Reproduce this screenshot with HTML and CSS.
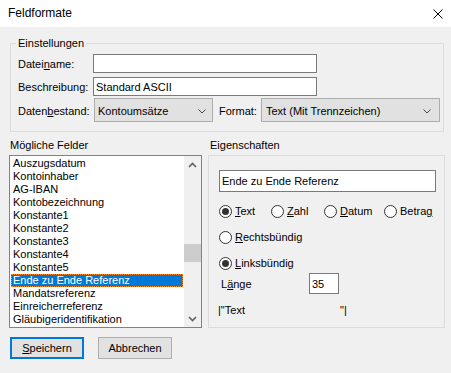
FILE: index.html
```html
<!DOCTYPE html>
<html lang="de">
<head>
    <meta charset="UTF-8">
    <title>Feldformate</title>
    <link rel="stylesheet" href="styles.css">
</head>
<body>
    <div class="titlebar">
        <span class="title">Feldformate</span>
        <svg class="close" width="10" height="10" viewBox="0 0 10 10">
            <path d="M0.5 0.5 L9.5 9.5 M9.5 0.5 L0.5 9.5" stroke="#000" stroke-width="1" fill="none"/>
        </svg>
    </div>

    <div class="dialog">
        <fieldset class="settings">
            <legend>Einstellungen</legend>

            <div class="row row-first">
                <label class="label">Datei<u>n</u>ame:</label>
                <input class="textbox" type="text" value="">
            </div>

            <div class="row row-second">
                <label class="label">Beschreibung:</label>
                <input class="textbox" type="text" value="Standard ASCII">
            </div>

            <div class="row row-third">
                <label class="label">Daten<u>b</u>estand:</label>
                <div class="combo combo-bestand">
                    <span>Kontoumsätze</span>
                    <svg width="8" height="5" viewBox="0 0 8 5"><polyline points="0.5,0.5 4,4 7.5,0.5" fill="none" stroke="#444" stroke-width="1"/></svg>
                </div>
                <label class="label-format">Format:</label>
                <div class="combo combo-format">
                    <span>Text (Mit Trennzeichen)</span>
                    <svg width="8" height="5" viewBox="0 0 8 5"><polyline points="0.5,0.5 4,4 7.5,0.5" fill="none" stroke="#444" stroke-width="1"/></svg>
                </div>
            </div>
        </fieldset>

        <div class="panels">
            <div class="col-fields">
                <div class="caption">Mögliche Felder</div>
                <div class="listbox">
                    <ul class="items">
                        <li>Auszugsdatum</li>
                        <li>Kontoinhaber</li>
                        <li>AG-IBAN</li>
                        <li>Kontobezeichnung</li>
                        <li>Konstante1</li>
                        <li>Konstante2</li>
                        <li>Konstante3</li>
                        <li>Konstante4</li>
                        <li>Konstante5</li>
                        <li class="selected">Ende zu Ende Referenz</li>
                        <li>Mandatsreferenz</li>
                        <li>Einreicherreferenz</li>
                        <li>Gläubigeridentifikation</li>
                    </ul>
                    <div class="scrollbar">
                        <div class="sb-btn">
                            <svg width="9" height="6" viewBox="0 0 9 6"><polyline points="1,5 4.5,1.5 8,5" fill="none" stroke="#606060" stroke-width="1.6"/></svg>
                        </div>
                        <div class="sb-track"><div class="sb-thumb"></div></div>
                        <div class="sb-btn">
                            <svg width="9" height="6" viewBox="0 0 9 6"><polyline points="1,1 4.5,4.5 8,1" fill="none" stroke="#606060" stroke-width="1.6"/></svg>
                        </div>
                    </div>
                </div>
            </div>

            <div class="col-props">
                <div class="caption">Eigenschaften</div>
                <div class="propbox">
                    <input class="textbox name-box" type="text" value="Ende zu Ende Referenz">

                    <div class="radio-row type-row">
                        <label class="opt opt-text"><input class="radio" type="radio" name="typ" checked><span><u>T</u>ext</span></label>
                        <label class="opt opt-zahl"><input class="radio" type="radio" name="typ"><span><u>Z</u>ahl</span></label>
                        <label class="opt opt-datum"><input class="radio" type="radio" name="typ"><span><u>D</u>atum</span></label>
                        <label class="opt"><input class="radio" type="radio" name="typ"><span>Betra<u>g</u></span></label>
                    </div>

                    <div class="radio-row">
                        <label class="opt"><input class="radio" type="radio" name="ausr"><span><u>R</u>echtsbündig</span></label>
                    </div>

                    <div class="radio-row">
                        <label class="opt"><input class="radio" type="radio" name="ausr" checked><span><u>L</u>inksbündig</span></label>
                    </div>

                    <div class="length-row">
                        <label class="length-label">L<u>ä</u>nge</label>
                        <input class="textbox length-box" type="text" value="35">
                    </div>

                    <div class="preview">
                        <span class="preview-start">|"Text</span>
                        <span>"|</span>
                    </div>
                </div>
            </div>
        </div>

        <div class="buttons">
            <button class="btn btn-default"><u>S</u>peichern</button>
            <button class="btn">Abbrechen</button>
        </div>
    </div>
</body>
</html>
```

FILE: styles.css
```css
*{
    margin: 0;
    padding: 0;
    box-sizing: border-box;
}

body{
    width: 451px;
    height: 373px;
    overflow: hidden;
    background-color: #f0f0f0;
    font-family: "Liberation Sans", Arial, sans-serif;
    font-size: 11px;
    line-height: 13px;
    color: #000;
}

u{
    text-decoration: underline;
    text-underline-offset: 1px;
}

.titlebar{
    display: flex;
    align-items: center;
    justify-content: space-between;
    height: 27px;
    padding: 0 8px 0 8px;
    background-color: #fff;

    .title{
        font-size: 12px;
    }

    .close{
        display: block;
        margin-top: 0;
    }
}

.dialog{
    padding: 10px 7px 0 9px;
}

.settings{
    margin-left: 1px;
    border: 1px solid #dcdcdc;
    padding: 0 0 9px 7px;
    min-width: 0;

    legend{
        padding: 0 2px;
        margin-left: -2px;
    }
}

.row{
    display: flex;
    align-items: center;
}

.row-first{
    margin-top: 4px;
}

.row-second{
    margin-top: 4px;
}

.row-third{
    margin-top: 2px;
}

.label{
    width: 75px;
    padding-top: 2px;
}

.textbox{
    font-family: inherit;
    font-size: 11px;
    color: #000;
    background-color: #fff;
    border: 1px solid #7a7a7a;
    padding: 0 2px;
    outline: none;
}

.row .textbox{
    width: 224px;
    height: 19px;
}

.combo{
    display: flex;
    align-items: center;
    justify-content: space-between;
    height: 24px;
    padding: 3px 6px 0 3px;
    background-color: #e1e1e1;
    border: 1px solid #adadad;

    svg{
        display: block;
    }
}

.combo-bestand{
    width: 119px;
    margin-left: 1px;
}

.label-format{
    width: 42px;
    margin-left: 6px;
    padding-top: 2px;
}

.combo-format{
    width: 179px;
    padding-left: 4px;
    padding-right: 8px;
}

.panels{
    display: flex;
    gap: 6px;
    margin-top: 7px;
}

.caption{
    height: 13px;
    margin-bottom: 3px;
}

.col-fields .caption{
    padding-left: 1px;
}

.col-props .caption{
    padding-left: 2px;
}

.listbox{
    display: flex;
    width: 193px;
    height: 173px;
    border: 1px solid #828282;
    background-color: #fff;
    overflow: hidden;

    .items{
        flex: 1;
        list-style: none;
        padding: 1px 1px 0 1px;
        overflow: hidden;

        li{
            height: 13px;
            padding-left: 2px;
            white-space: nowrap;
        }

        .selected{
            background-color: #0078d7;
            color: #fff;
            outline: 1px dotted #ff8728;
            outline-offset: -1px;
        }
    }
}

.scrollbar{
    display: flex;
    flex-direction: column;
    width: 17px;
    background-color: #f0f0f0;

    .sb-btn{
        display: flex;
        align-items: center;
        justify-content: center;
        height: 17px;
    }

    .sb-track{
        flex: 1;
    }

    .sb-thumb{
        height: 18px;
        margin-top: 71px;
        background-color: #cdcdcd;
    }
}

.propbox{
    width: 237px;
    height: 173px;
    border: 1px solid #dcdcdc;
    padding: 14px 0 0 10px;
}

.name-box{
    display: block;
    width: 217px;
    height: 22px;
    padding-left: 2px;
}

.radio-row{
    display: flex;
    height: 13px;
    margin-top: 13px;
}

.type-row{
    margin-top: 13px;
}

.opt{
    display: flex;
    align-items: center;
    gap: 3px;
}

.opt-text{
    width: 52px;
}

.opt-zahl{
    width: 53px;
}

.opt-datum{
    width: 60px;
}

.radio{
    appearance: none;
    width: 13px;
    height: 13px;
    border: 1px solid #333;
    border-radius: 50%;
    background-color: #fff;
    display: flex;
    align-items: center;
    justify-content: center;

    &:checked::after{
        content: "";
        width: 7px;
        height: 7px;
        border-radius: 50%;
        background-color: #333;
    }
}

.length-row{
    display: flex;
    align-items: center;
    margin-top: 3px;

    .length-label{
        width: 88px;
        margin-left: 2px;
        padding-top: 2px;
    }

    .length-box{
        width: 30px;
        height: 21px;
        padding-left: 2px;
    }
}

.preview{
    display: flex;
    margin-top: 10px;

    .preview-start{
        width: 122px;
        margin-left: -1px;
    }
}

.buttons{
    display: flex;
    gap: 14px;
    margin-top: 9px;
    padding-left: 1px;
}

.btn{
    width: 74px;
    height: 22px;
    font-family: inherit;
    font-size: 11px;
    color: #000;
    background-color: #e1e1e1;
    border: 1px solid #adadad;
}

.btn-default{
    border: 2px solid #0078d7;
}
```
